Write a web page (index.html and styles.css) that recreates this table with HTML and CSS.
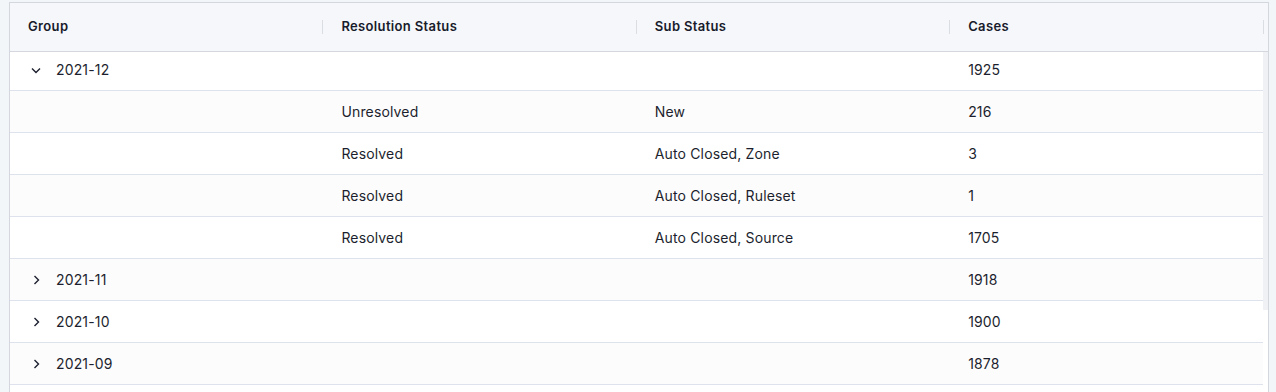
FILE: index.html
```html
<!DOCTYPE html>
<html>
<head>
<meta charset="utf-8">
<link rel="stylesheet" href="styles.css">
</head>
<body>
<div class="grid">
  <div class="header">
    <div class="hcell">Group</div>
    <div class="hcell">Resolution Status</div>
    <div class="hcell">Sub Status</div>
    <div class="hcell">Cases</div>
  </div>
  <div class="body">
    <div class="rows">
      <div class="row">
        <div class="cell group"><svg class="chev" viewBox="0 0 16 16"><path d="M4 6.5 L8 10.5 L12 6.5"/></svg>2021-12</div>
        <div class="cell"></div><div class="cell"></div><div class="cell">1925</div>
      </div>
      <div class="row alt">
        <div class="cell"></div><div class="cell">Unresolved</div><div class="cell">New</div><div class="cell">216</div>
      </div>
      <div class="row">
        <div class="cell"></div><div class="cell">Resolved</div><div class="cell">Auto Closed, Zone</div><div class="cell">3</div>
      </div>
      <div class="row alt">
        <div class="cell"></div><div class="cell">Resolved</div><div class="cell">Auto Closed, Ruleset</div><div class="cell">1</div>
      </div>
      <div class="row">
        <div class="cell"></div><div class="cell">Resolved</div><div class="cell">Auto Closed, Source</div><div class="cell">1705</div>
      </div>
      <div class="row alt">
        <div class="cell group"><svg class="chev" viewBox="0 0 16 16"><path d="M6.5 4 L10.5 8 L6.5 12"/></svg>2021-11</div>
        <div class="cell"></div><div class="cell"></div><div class="cell">1918</div>
      </div>
      <div class="row">
        <div class="cell group"><svg class="chev" viewBox="0 0 16 16"><path d="M6.5 4 L10.5 8 L6.5 12"/></svg>2021-10</div>
        <div class="cell"></div><div class="cell"></div><div class="cell">1900</div>
      </div>
      <div class="row alt">
        <div class="cell group"><svg class="chev" viewBox="0 0 16 16"><path d="M6.5 4 L10.5 8 L6.5 12"/></svg>2021-09</div>
        <div class="cell"></div><div class="cell"></div><div class="cell">1878</div>
      </div>
      <div class="row">
        <div class="cell"></div><div class="cell"></div><div class="cell"></div><div class="cell"></div>
      </div>
    </div>
    <div class="scroll"><div class="thumb"></div></div>
  </div>
</div>
</body>
</html>
```
FILE: styles.css
```css
html, body {
  margin: 0;
  height: 100%;
  overflow: hidden;
}
body {
  background: #f3f6f9;
  padding: 2px 8px 0 9px;
  font-family: Inter, "Liberation Sans", sans-serif;
  font-size: 14px;
  color: #1c1f2e;
}
.grid {
  width: 1258px;
  border: 1px solid #d4d8de;
  background: #fff;
}
.header {
  display: grid;
  grid-template-columns: repeat(4, 313.4px) 1fr;
  height: 48px;
  background: #f5f7fa;
  border-bottom: 1px solid #d4d8de;
}
.hcell {
  position: relative;
  display: flex;
  align-items: center;
  padding-left: 18px;
  padding-bottom: 2px;
  font-size: 13px;
  font-weight: 600;
  letter-spacing: 0.35px;
  color: #181b2b;
}
.hcell::after {
  content: "";
  position: absolute;
  right: 0;
  top: 17px;
  width: 1px;
  height: 14px;
  background: #dadde2;
}
.body {
  display: flex;
  height: 400px;
  overflow: hidden;
}
.rows {
  width: 1253px;
  margin-top: -3px;
}
.row {
  display: grid;
  grid-template-columns: repeat(4, 313.4px) 1fr;
  height: 41px;
  border-bottom: 1px solid #dde2ec;
  background: #fff;
}
.row.alt {
  background: #fcfcfc;
}
.cell {
  display: flex;
  align-items: center;
  padding-left: 18px;
  white-space: nowrap;
  letter-spacing: 0.15px;
}
.chev {
  width: 16px;
  height: 16px;
  margin-right: 12px;
  fill: none;
  stroke: #1c1f2e;
  stroke-width: 1.4;
}
.scroll {
  width: 5px;
  background: #fff;
}
.thumb {
  height: 258px;
  background: #eff1f4;
}
```
